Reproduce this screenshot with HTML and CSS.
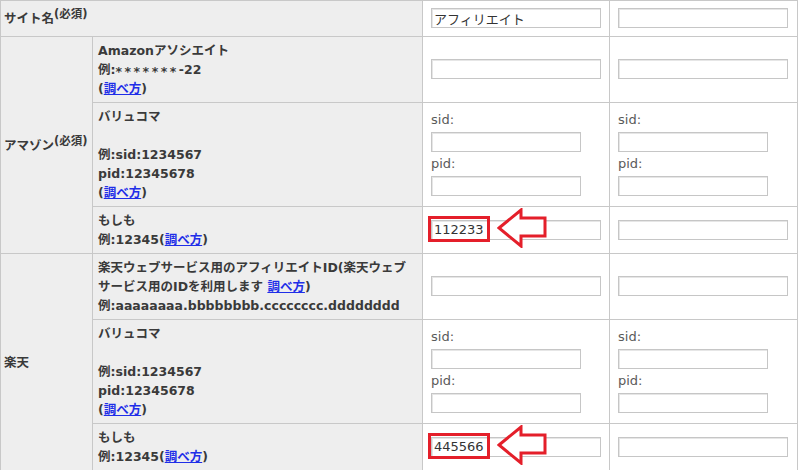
FILE: index.html
```html
<!DOCTYPE html>
<html lang="ja">
<head>
<meta charset="utf-8">
<title>アフィリエイト設定</title>
<link rel="stylesheet" href="styles.css">
</head>
<body>
<table class="form">
  <colgroup>
    <col class="c-group">
    <col class="c-item">
    <col class="c-in">
    <col class="c-in2">
  </colgroup>
  <tr>
    <th colspan="2" class="group">サイト名<sup>(必須)</sup></th>
    <td class="in"><input class="txt" value="アフィリエイト"></td>
    <td class="in"><input class="txt"></td>
  </tr>
  <tr>
    <th rowspan="3" class="group">アマゾン<sup>(必須)</sup></th>
    <th class="item">Amazonアソシエイト<br>例:<span class="stars">*******</span>-22<br>(<a href="#">調べ方</a>)</th>
    <td class="in"><input class="txt"></td>
    <td class="in"><input class="txt"></td>
  </tr>
  <tr>
    <th class="item">バリュコマ<br><br>例:sid:1234567<br>pid:12345678<br>(<a href="#">調べ方</a>)</th>
    <td class="in">
      <div class="field-label">sid:</div><input class="txt short">
      <div class="field-label">pid:</div><input class="txt short">
    </td>
    <td class="in">
      <div class="field-label">sid:</div><input class="txt short">
      <div class="field-label">pid:</div><input class="txt short">
    </td>
  </tr>
  <tr>
    <th class="item">もしも<br>例:12345(<a href="#">調べ方</a>)</th>
    <td class="in">
      <div class="mark">
        <input class="txt" value="112233">
        <span class="hl"></span>
        <svg class="arrow" viewBox="0 0 50 40" width="50" height="40"><polygon points="2,20 24,2 24,10 48,10 48,28 24,28 24,38" fill="#fff" stroke="#e41f2a" stroke-width="3" stroke-linejoin="miter"/></svg>
      </div>
    </td>
    <td class="in"><input class="txt"></td>
  </tr>
  <tr>
    <th rowspan="3" class="group">楽天</th>
    <th class="item">楽天ウェブサービス用のアフィリエイトID(楽天ウェブサービス用のIDを利用します <a href="#">調べ方</a>)<br>例:aaaaaaaa.bbbbbbbb.cccccccc.dddddddd</th>
    <td class="in"><input class="txt"></td>
    <td class="in"><input class="txt"></td>
  </tr>
  <tr>
    <th class="item">バリュコマ<br><br>例:sid:1234567<br>pid:12345678<br>(<a href="#">調べ方</a>)</th>
    <td class="in">
      <div class="field-label">sid:</div><input class="txt short">
      <div class="field-label">pid:</div><input class="txt short">
    </td>
    <td class="in">
      <div class="field-label">sid:</div><input class="txt short">
      <div class="field-label">pid:</div><input class="txt short">
    </td>
  </tr>
  <tr>
    <th class="item">もしも<br>例:12345(<a href="#">調べ方</a>)</th>
    <td class="in">
      <div class="mark">
        <input class="txt" value="445566">
        <span class="hl"></span>
        <svg class="arrow" viewBox="0 0 50 40" width="50" height="40"><polygon points="2,20 24,2 24,10 48,10 48,28 24,28 24,38" fill="#fff" stroke="#e41f2a" stroke-width="3" stroke-linejoin="miter"/></svg>
      </div>
    </td>
    <td class="in"><input class="txt"></td>
  </tr>
</table>
</body>
</html>
```

FILE: styles.css
```css
html, body {
  margin: 0;
  padding: 0;
  background: #fff;
  overflow: hidden;
}

body {
  font-family: "DejaVu Sans", "Noto Sans CJK JP", sans-serif;
  color: #3a3a3a;
}

.form {
  border-collapse: collapse;
  table-layout: fixed;
  width: 798px;
}

.c-group { width: 92px; }
.c-item { width: 330px; }
.c-in { width: 187px; }
.c-in2 { width: 188px; }

.form th,
.form td {
  border: 1px solid #c8c8c8;
}

.form th {
  background: #eeeeee;
  font-weight: bold;
  font-size: 12.5px;
  line-height: 19px;
  text-align: left;
  vertical-align: middle;
  padding: 4px 5px;
}

.form th.group {
  padding: 4px 3px;
}

.form sup {
  font-size: 11.5px;
  line-height: 0;
  vertical-align: 5px;
}

.stars {
  letter-spacing: 2.5px;
  position: relative;
  top: 2px;
}

.form a {
  color: #1f2ee8;
  text-decoration: underline;
}

.form td.in {
  padding: 7px 8px 8px;
  vertical-align: middle;
}

.txt {
  display: block;
  box-sizing: border-box;
  width: 170px;
  height: 20px;
  margin: 0;
  padding: 0 2px;
  border: 1px solid #c6c6c6;
  box-shadow: inset 1px 1px 0 #e6e6e6;
  background: #fff;
  font-family: "DejaVu Sans", "Noto Sans CJK JP", sans-serif;
  font-size: 13px;
  color: #333;
  outline: none;
}

.txt.short {
  width: 150px;
  margin: 2px 0;
}

.field-label {
  font-size: 13px;
  line-height: 20px;
  color: #5a5a5a;
}

.mark {
  position: relative;
}

.hl {
  position: absolute;
  left: -3px;
  top: -4px;
  width: 62px;
  height: 26px;
  box-sizing: border-box;
  border: 3px solid #e41f2a;
}

.arrow {
  position: absolute;
  left: 66px;
  top: -12px;
}
```
